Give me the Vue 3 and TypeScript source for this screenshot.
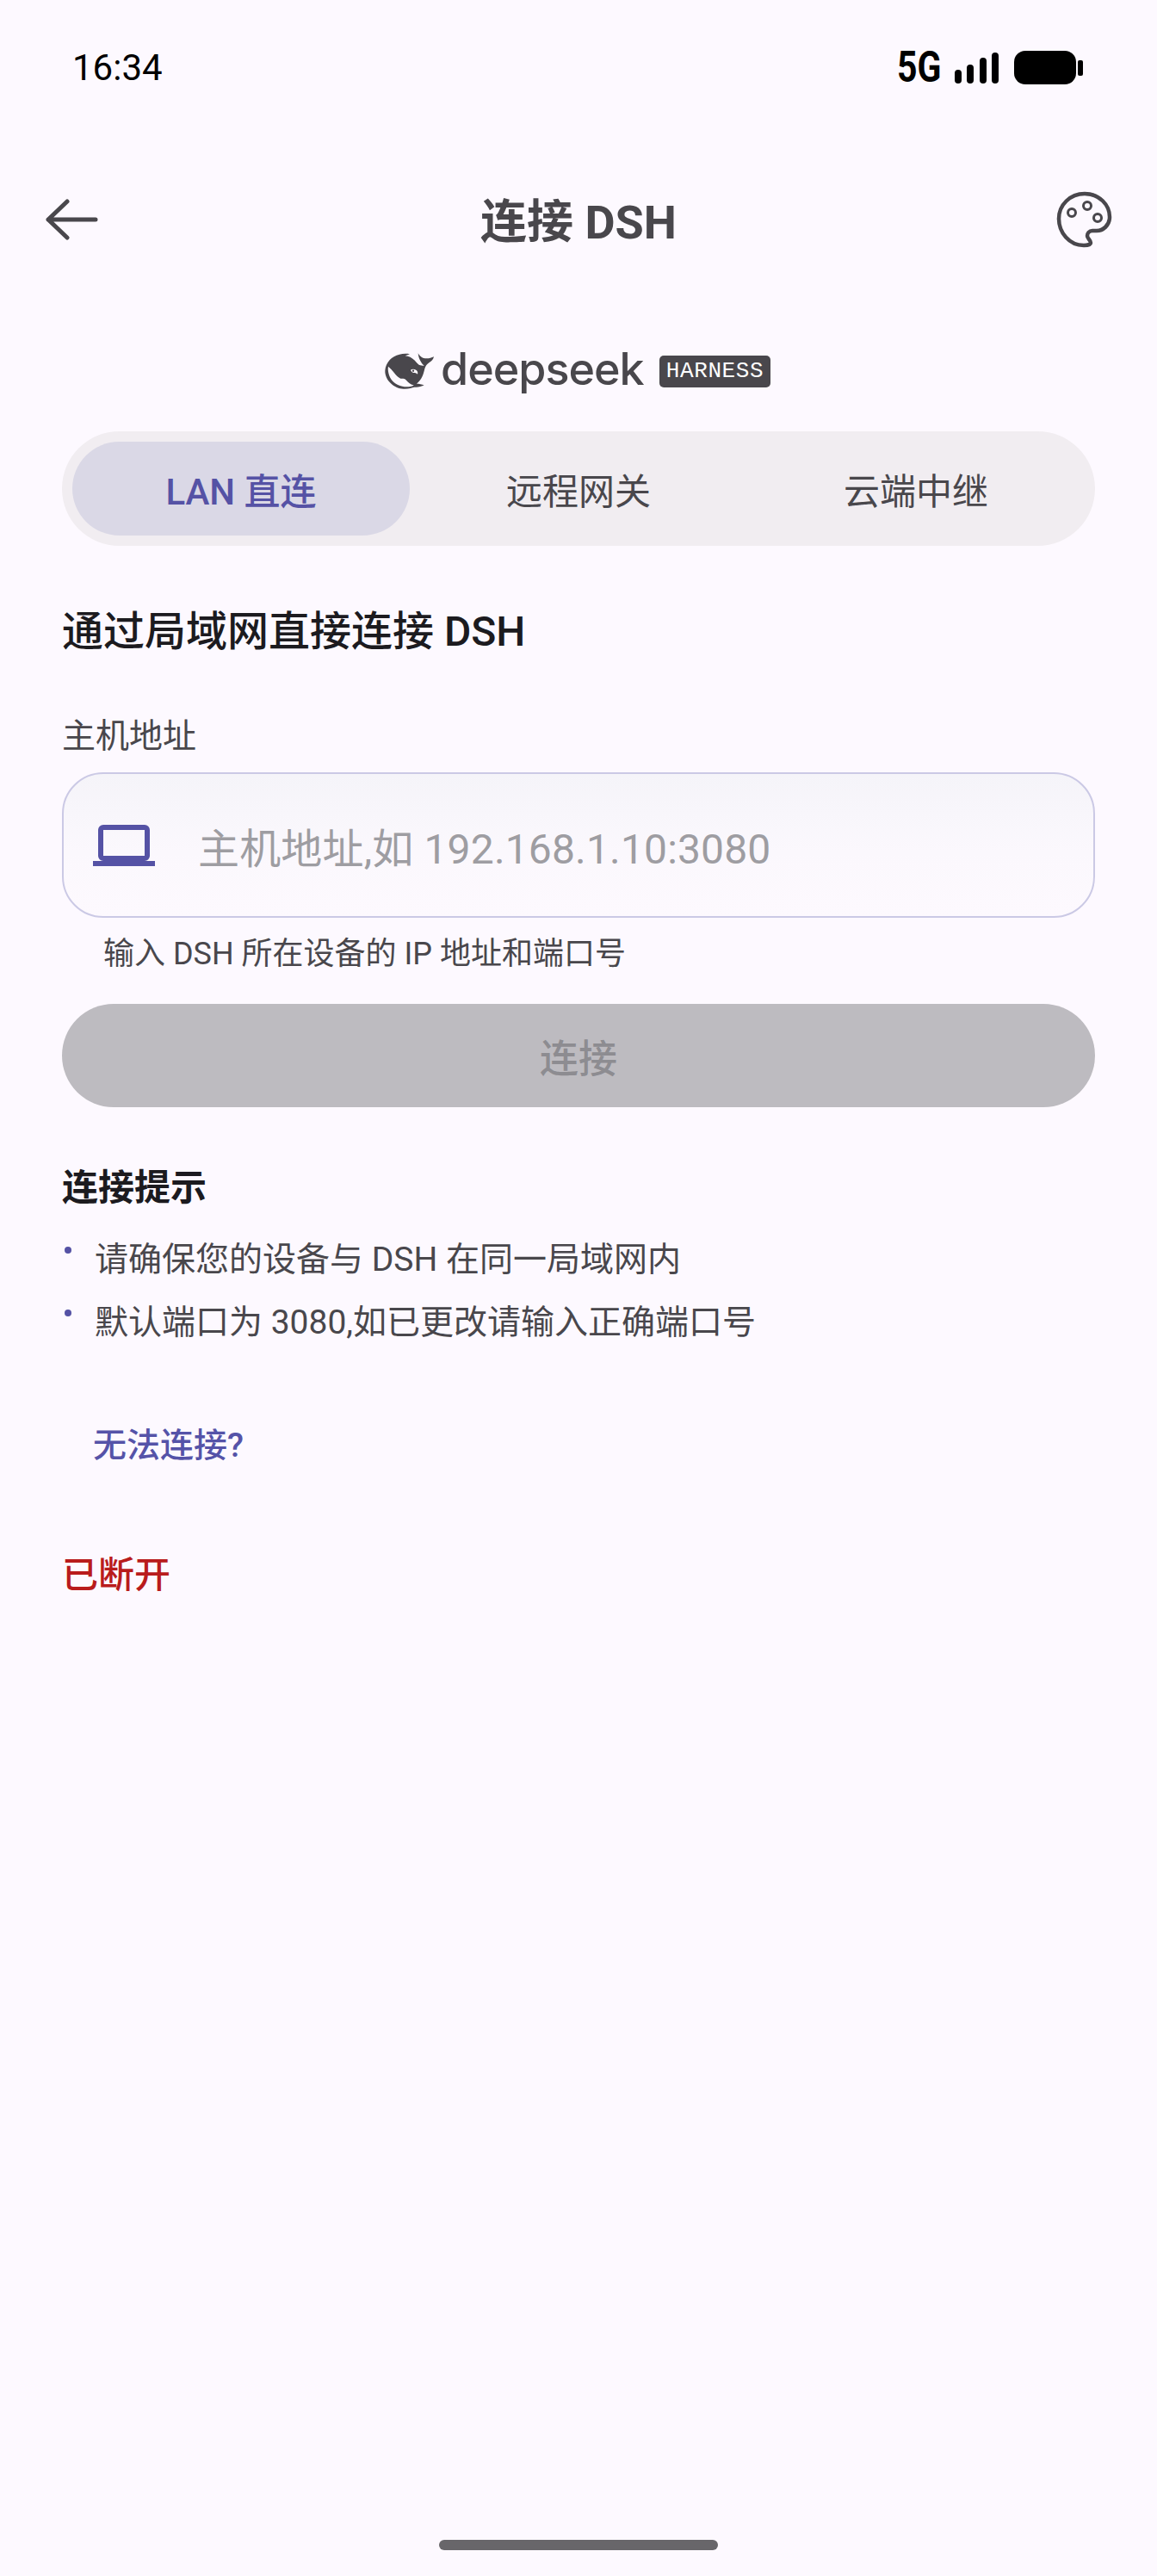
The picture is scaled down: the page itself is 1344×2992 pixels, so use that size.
<script setup lang="ts">
const tabs: string[] = ['LAN 直连', '远程网关', '云端中继']
const tips: string[] = ['请确保您的设备与 DSH 在同一局域网内', '默认端口为 3080,如已更改请输入正确端口号']
</script>

<template>
  <div class="page">
    <div class="status">
      <span class="time">16:34</span>
      <div class="status-right">
        <span class="net">5G</span>
        <svg class="bars" width="51" height="36" viewBox="0 0 51 36" fill="#000">
          <rect x="0" y="20" width="8" height="16" rx="4" />
          <rect x="14" y="14" width="8" height="22" rx="4" />
          <rect x="29" y="6" width="8" height="30" rx="4" />
          <rect x="43" y="0" width="8" height="36" rx="4" />
        </svg>
        <svg class="battery" width="80" height="39" viewBox="0 0 80 39" fill="#000">
          <rect x="0" y="0" width="72" height="39" rx="13" />
          <rect x="74" y="11" width="6" height="18" rx="2" />
        </svg>
      </div>
    </div>

    <header class="top">
      <svg class="icon" width="72" height="72" viewBox="0 0 72 72" fill="none" stroke="#49474c" stroke-width="5" stroke-linecap="round" stroke-linejoin="round">
        <path d="M63 36H8M30 15 8 36l22 21" />
      </svg>
      <h1 class="title">连接 DSH</h1>
      <svg class="icon" width="72" height="72" viewBox="0 0 72 72" fill="none" stroke="#49474c" stroke-width="4.5">
        <path d="M35 66C18 66 6 51 6 35 6 19 19 6 36 6c17 0 29 13 29 27 0 10-8 16-15 16h-5c-4 0-6 3-6 6 0 3 4 5 4 8 0 2-4 3-8 3z" />
        <circle cx="21" cy="28" r="4.5" stroke-width="3" />
        <circle cx="39" cy="20" r="4.5" stroke-width="3" />
        <circle cx="51" cy="34" r="4.5" stroke-width="3" />
      </svg>
    </header>

    <div class="brand">
      <svg class="whale" width="72" height="60" viewBox="0 0 216 180">
        <path fill="#49474c" d="M22 88C24 60 45 38 72 32C84 29 98 29 108 31L92 37C104 38 116 44 124 52C130 58 134 64 140 68C146 71 152 70 158 72C148 62 139 48 137 28C141 36 147 41 154 44C166 48 180 46 192 40C190 50 184 56 176 60C168 65 163 72 160 82C156 100 150 120 132 134C140 134 150 136 158 139C148 145 136 147 124 146C116 148 106 152 90 152C60 155 20 125 22 88Z" />
        <path fill="#fdf9ff" d="M33 74C40 80 47 87 53 95C60 104 68 112 76 116C82 118 86 114 91 118C98 124 104 132 112 136C116 138 120 139 122 140C108 146 94 146 82 143C60 139 43 124 36 104C33 94 31 84 33 74Z" />
        <path fill="#fdf9ff" d="M111 86C119 81 130 84 135 92C136 95 136 98 135 101C131 97 126 96 122 96C117 95 113 91 111 86Z" />
        <circle cx="120" cy="89" r="3.5" fill="#49474c" />
      </svg>
      <span class="wordmark">deepseek</span>
      <span class="badge">HARNESS</span>
    </div>

    <div class="tabs">
      <div v-for="(t, i) in tabs" :key="t" class="tab" :class="{ active: i === 0 }">{{ t }}</div>
    </div>

    <h2 class="section">通过局域网直接连接 DSH</h2>
    <div class="label">主机地址</div>
    <div class="field">
      <svg class="laptop" width="72" height="48" viewBox="0 0 72 48" fill="#5552a5">
        <path fill-rule="evenodd" d="M12 0h48a6 6 0 0 1 6 6v30a6 6 0 0 1-6 6H12a6 6 0 0 1-6-6V6a6 6 0 0 1 6-6zm0 6v30h48V6z" />
        <rect x="0" y="42" width="72" height="6" />
      </svg>
      <span class="placeholder">主机地址,如 192.168.1.10:3080</span>
    </div>
    <div class="help">输入 DSH 所在设备的 IP 地址和端口号</div>
    <div class="connect">连接</div>

    <h3 class="tips-title">连接提示</h3>
    <ul class="tips">
      <li v-for="t in tips" :key="t"><i class="dot"></i>{{ t }}</li>
    </ul>
    <div class="trouble">无法连接?</div>
    <div class="state">已断开</div>

    <div class="spacer"></div>
    <div class="home"></div>
  </div>
</template>

<style>
html, body { margin: 0; background: #fdf9ff; }
</style>

<style scoped>
.page {
  width: 1344px;
  height: 2992px;
  box-sizing: border-box;
  background: #fdf9ff;
  display: flex;
  flex-direction: column;
  font-family: Roboto, "Noto Sans CJK SC", sans-serif;
  color: #49474c;
  overflow: hidden;
}
.status {
  height: 156px;
  box-sizing: border-box;
  padding: 57px 84px 0 84px;
  display: flex;
  justify-content: space-between;
  align-items: flex-start;
}
.time { font-size: 42px; line-height: 44px; color: #000; }
.status-right { display: flex; align-items: center; margin-top: 2px; margin-right: 2px; height: 39px; }
.net { font-size: 50px; font-weight: 700; line-height: 39px; color: #000; transform: scaleX(.82); transform-origin: left center; width: 67px; }
.bars { margin-right: 18px; }
.top {
  height: 72px;
  margin-top: 63px;
  box-sizing: border-box;
  padding: 0 48px;
  display: flex;
  justify-content: space-between;
  align-items: center;
}
.title { margin: 8px 0 0; font-size: 54px; font-weight: 700; line-height: 72px; }
.brand {
  margin-top: 116px;
  height: 48px;
  display: flex;
  align-items: center;
  padding-left: 440px;
}
.whale { flex: none; }
.wordmark {
  font-family: Inter, sans-serif;
  font-size: 52px;
  font-weight: 500;
  line-height: 48px;
  width: 256px;
  letter-spacing: -1px;
  margin-bottom: 4px;
}
.badge {
  background: #49474c;
  color: #fff;
  border-radius: 5px;
  font-family: "Liberation Mono", monospace;
  font-size: 26px;
  line-height: 37px;
  height: 37px;
  width: 129px;
  text-align: center;
  letter-spacing: .6px;
  margin-left: -2px;
}
.tabs {
  margin: 46px 72px 0;
  height: 133px;
  box-sizing: border-box;
  padding: 12px;
  border-radius: 67px;
  background: #f1edf1;
  display: grid;
  grid-template-columns: repeat(3, 1fr);
}
.tab {
  display: flex;
  align-items: center;
  justify-content: center;
  border-radius: 55px;
  font-size: 42px;
}
.tab.active { background: #dad8e6; color: #5552a5; font-weight: 500; }
.section { margin: 67px 72px 0; font-size: 48px; font-weight: 500; line-height: 66px; color: #1c1b1f; }
.label { margin: 61px 72px 0; font-size: 39px; line-height: 54px; }
.field {
  margin: 15px 72px 0;
  height: 169px;
  box-sizing: border-box;
  border: 2px solid #cbc9e5;
  border-radius: 48px;
  background: linear-gradient(#f5f4f9, #fbf8fd 55%, #fdf9fe);
  display: flex;
  align-items: center;
  padding-left: 34px;
}
.laptop { flex: none; margin-right: 50px; }
.placeholder { font-size: 48px; color: #9e9da2; letter-spacing: .16px; }
.help { margin: 18px 72px 0 120px; font-size: 36px; line-height: 48px; }
.connect {
  margin: 34px 72px 0;
  height: 120px;
  border-radius: 60px;
  background: #bdbbc0;
  color: #8d8c91;
  font-size: 45px;
  font-weight: 500;
  display: flex;
  align-items: center;
  justify-content: center;
}
.tips-title { margin: 66px 72px 0; font-size: 42px; font-weight: 700; line-height: 56px; color: #1c1b1f; }
.tips { list-style: none; margin: 19px 0 0 72px; padding: 0; }
.tips li { position: relative; padding-left: 38px; font-size: 39px; line-height: 73px; }
.dot { position: absolute; left: 3px; top: 21px; width: 8px; height: 8px; border-radius: 50%; background: #5552a5; }
.trouble { margin: 78px 0 0 108px; font-size: 39px; font-weight: 500; line-height: 56px; color: #5553a8; }
.state { margin: 95px 0 0 72px; font-size: 42px; font-weight: 500; line-height: 56px; color: #b91c1c; }
.spacer { flex: 1; }
.home { align-self: center; width: 324px; height: 12px; border-radius: 6px; background: #68666a; margin-bottom: 30px; }
</style>
